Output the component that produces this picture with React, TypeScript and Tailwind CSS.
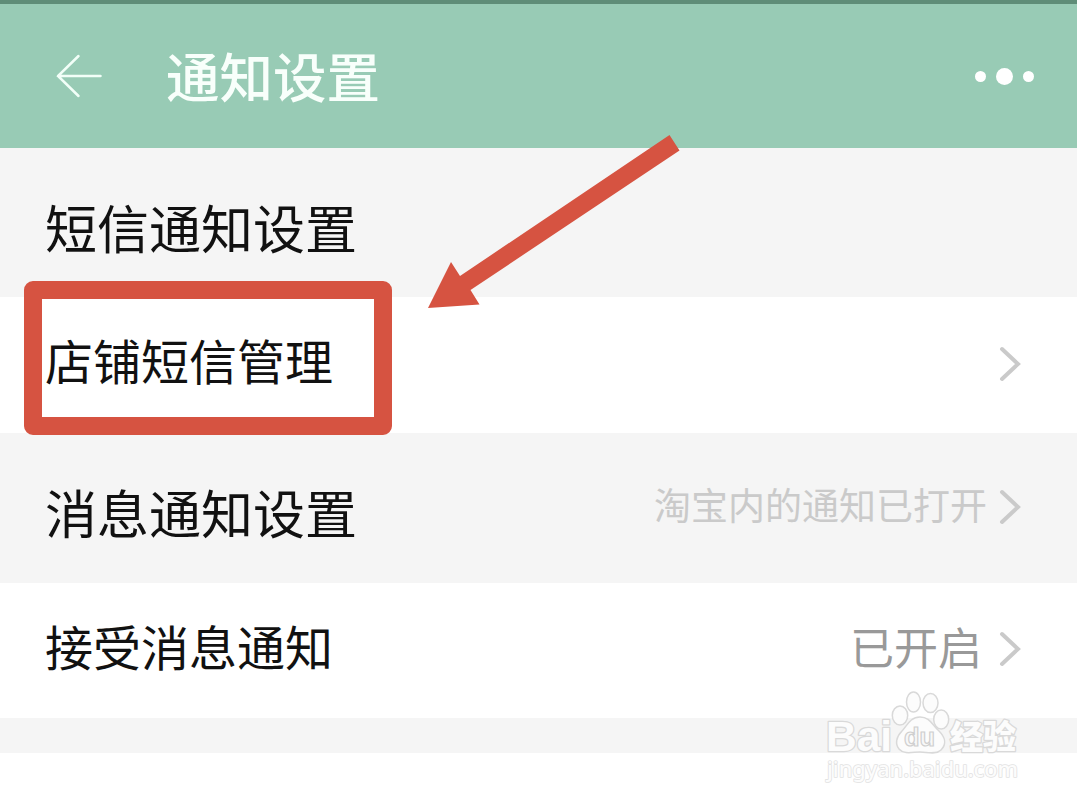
import { ReactNode } from "react";

const Chevron = () => (
  <svg className="h-9 w-6 shrink-0" viewBox="0 0 24 36" fill="none">
    <path d="M5 3 L21 18 L5 33" stroke="#cacaca" strokeWidth="4" strokeLinecap="round" strokeLinejoin="miter" />
  </svg>
);

type RowProps = {
  className: string;
  label: string;
  children?: ReactNode;
};

function Row({ className, label, children }: RowProps) {
  return (
    <div className={`flex items-center justify-between pl-[45px] pr-14 leading-none text-[#111] ${className}`}>
      <span>{label}</span>
      {children}
    </div>
  );
}

function Watermark() {
  return (
    <svg
      className="absolute left-[800px] top-[680px] h-[127px] w-[240px]"
      viewBox="0 0 240 127"
      fill="#fcfcfc"
      stroke="#d9d9d9"
      strokeWidth="1.5"
    >
      <g style={{ paintOrder: "stroke" }} strokeWidth="2.6" strokeLinejoin="round">
        <text x="26" y="71" fontFamily="Liberation Sans" fontWeight="700" fontSize="43" textLength="66" lengthAdjust="spacingAndGlyphs">Bai</text>
        <text x="150" y="69" fontFamily="'Liberation Sans', 'Noto Sans CJK SC', sans-serif" fontWeight="900" fontSize="33" textLength="66" lengthAdjust="spacingAndGlyphs">经验</text>
        <text x="27" y="97" fontFamily="Noto Sans" fontWeight="500" fontSize="22" strokeWidth="1.6" stroke="#e2e2e2" textLength="191" lengthAdjust="spacingAndGlyphs">jingyan.baidu.com</text>
      </g>
      <ellipse cx="100" cy="35.500" rx="7.700" ry="9.500" />
      <ellipse cx="113.500" cy="22" rx="7" ry="10" />
      <ellipse cx="130.500" cy="23" rx="7.500" ry="9.500" />
      <ellipse cx="141.200" cy="39.500" rx="7.500" ry="9.500" />
      <path d="M120 37 C110 37 107 46 102 51 C96 57 95 64 99 69 C104 75 113 72 120 72 C127 72 136 75 141 70 C147 64 145 57 139 51 C132 45 130 37 120 37Z" />
      <text x="104" y="66" fontFamily="Liberation Sans" fontWeight="700" fontSize="26" strokeWidth="1.200" fill="#f8f8f8" stroke="#cfcfcf" textLength="31" lengthAdjust="spacingAndGlyphs">du</text>
    </svg>
  );
}

export default function App() {
  return (
    <div className="relative h-[807px] w-[1077px] overflow-hidden bg-white font-['Noto_Sans_CJK_SC',sans-serif]" lang="zh-CN">
      <header className="flex h-[148px] items-center justify-between border-t-4 border-[#5f8d78] bg-[#98cbb5] pl-[55px] pr-[43px]">
        <div className="flex items-center">
          <svg className="mr-[63px] h-12 w-12" viewBox="0 0 48 48" fill="none" stroke="#f2fff8" strokeWidth="2.5" strokeLinecap="round">
            <path d="M23.500 4 L3 24 L23.500 44 M3 24 H45.500" />
          </svg>
          <h1 className="pb-[3px] text-[53.500px] leading-none font-medium text-[#f8fffb]">通知设置</h1>
        </div>
        <div className="flex items-center gap-2.5">
          <span className="size-[11px] rounded-full bg-white" />
          <span className="size-[17px] rounded-full bg-white" />
          <span className="size-[11px] rounded-full bg-white" />
        </div>
      </header>

      <Row className="h-[149px] bg-[#f5f5f5] pt-2 text-[52px]" label="短信通知设置" />
      <Row className="h-[136px] bg-white pb-3 text-[48px]" label="店铺短信管理">
        <div className="pt-2.5"><Chevron /></div>
      </Row>
      <Row className="h-[150px] bg-[#f5f5f5] pt-[7px] text-[52px]" label="消息通知设置">
        <div className="flex items-center gap-2.5 pb-[9px]">
          <span className="pb-1.5 text-[37px] text-[#cacaca]">淘宝内的通知已打开</span>
          <Chevron />
        </div>
      </Row>
      <Row className="h-[135px] bg-white pb-3 text-[48px]" label="接受消息通知">
        <div className="flex items-center gap-[15px] pt-[9px]">
          <span className="pb-[7px] text-[44px] text-[#999]">已开启</span>
          <Chevron />
        </div>
      </Row>
      <div className="h-[35px] bg-[#f5f5f5]" />

      {/* highlight box and arrow */}
      <div className="absolute left-6 top-[281px] h-[154px] w-[368px] rounded-[9px] border-[18px] border-[#d65341]" />
      <svg className="absolute left-[420px] top-[130px] h-[185px] w-[270px]" viewBox="420 130 270 185">
        <path d="M428 308 L451 262 L460 276 L669.500 135 L679.500 150.500 L470.500 290 L479.500 304.500Z" fill="#d65341" />
      </svg>
      <Watermark />
    </div>
  );
}
